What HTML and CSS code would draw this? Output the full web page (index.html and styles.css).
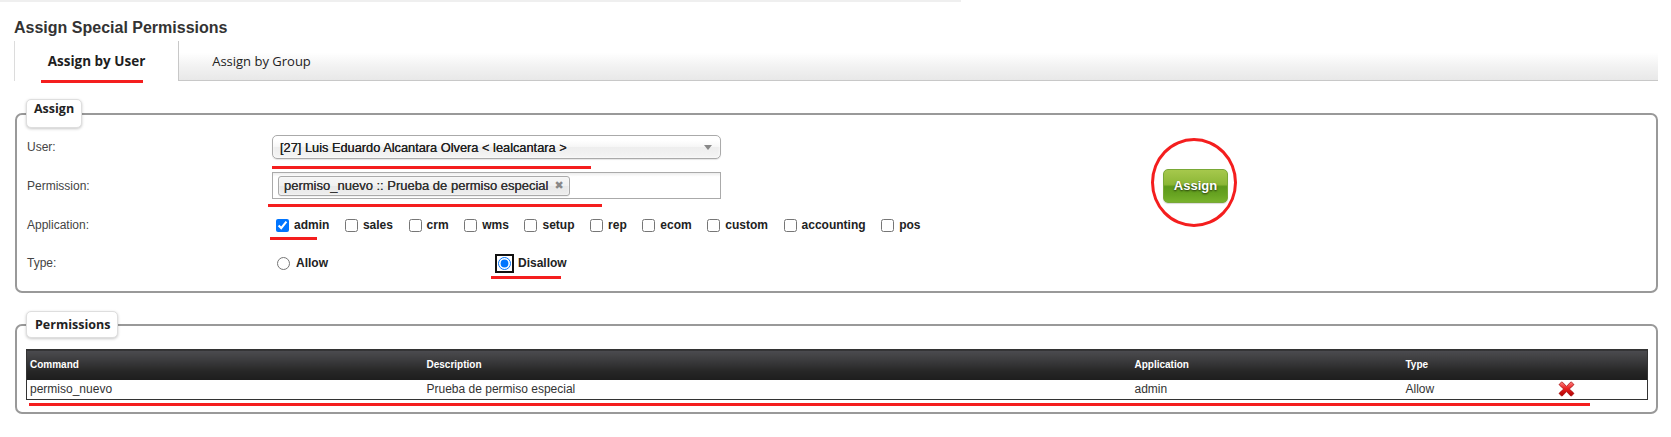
FILE: index.html
```html
<!DOCTYPE html>
<html lang="es">
<head>
<meta charset="utf-8">
<title>Assign Special Permissions</title>
<link rel="stylesheet" href="styles.css">
</head>
<body>
<div class="topline"></div>
<div class="page">
  <h1 class="title">Assign Special Permissions</h1>
  <div class="tabs">
    <div class="tab tab-active">Assign by User</div>
    <div class="tab">Assign by Group</div>
  </div>

  <fieldset class="box box-assign">
    <legend class="box-legend">Assign</legend>
    <div class="form-rows">
      <div class="f-row row-user">
        <label class="f-label">User:</label>
        <div class="chosen-single">
          <span class="chosen-text">[27] Luis Eduardo Alcantara Olvera &lt; lealcantara &gt;</span>
          <b class="chosen-arrow"></b>
        </div>
      </div>

      <div class="f-row row-perm">
        <label class="f-label">Permission:</label>
        <div class="chosen-multi">
          <span class="choice">permiso_nuevo :: Prueba de permiso especial<span class="choice-close">&#x2716;</span></span>
        </div>
        <div class="btn-cell"><button class="btn-assign" type="button">Assign</button></div>
      </div>

      <div class="f-row row-app">
        <label class="f-label">Application:</label>
        <div class="checks">
          <label class="chk"><input type="checkbox" checked><span>admin</span></label>
          <label class="chk"><input type="checkbox"><span>sales</span></label>
          <label class="chk"><input type="checkbox"><span>crm</span></label>
          <label class="chk"><input type="checkbox"><span>wms</span></label>
          <label class="chk"><input type="checkbox"><span>setup</span></label>
          <label class="chk"><input type="checkbox"><span>rep</span></label>
          <label class="chk"><input type="checkbox"><span>ecom</span></label>
          <label class="chk"><input type="checkbox"><span>custom</span></label>
          <label class="chk"><input type="checkbox"><span>accounting</span></label>
          <label class="chk"><input type="checkbox"><span>pos</span></label>
        </div>
      </div>

      <div class="f-row row-type">
        <label class="f-label">Type:</label>
        <div class="radios">
          <label class="rad rad-allow"><input type="radio" name="type"><span>Allow</span></label>
          <label class="rad rad-disallow"><input class="radio-focus" type="radio" name="type" checked><span>Disallow</span></label>
        </div>
      </div>
    </div>
  </fieldset>

  <fieldset class="box box-perms">
    <legend class="box-legend legend-perms">Permissions</legend>
    <table class="perm-table">
      <colgroup>
        <col class="c-cmd"><col class="c-desc"><col class="c-app"><col class="c-type"><col class="c-act">
      </colgroup>
      <thead>
        <tr><th>Command</th><th>Description</th><th>Application</th><th>Type</th><th></th></tr>
      </thead>
      <tbody>
        <tr>
          <td>permiso_nuevo</td>
          <td>Prueba de permiso especial</td>
          <td>admin</td>
          <td>Allow</td>
          <td class="act-cell">
            <svg class="del-icon" width="17" height="16" viewBox="0 0 17 16" aria-label="delete">
              <defs>
                <linearGradient id="xg" x1="0" y1="0" x2="0" y2="1">
                  <stop offset="0" stop-color="#ff8080"/>
                  <stop offset="0.45" stop-color="#ea2222"/>
                  <stop offset="1" stop-color="#b00000"/>
                </linearGradient>
              </defs>
              <path d="M3.4 1.2 Q4 0.8 4.6 1.3 L8.5 5.4 L12.4 1.3 Q13 0.8 13.6 1.2 L15.6 3 Q16 3.6 15.5 4.2 L11.3 8 L15.5 11.8 Q16 12.4 15.6 13 L13.6 14.8 Q13 15.2 12.4 14.7 L8.5 10.6 L4.6 14.7 Q4 15.2 3.4 14.8 L1.4 13 Q1 12.4 1.5 11.8 L5.7 8 L1.5 4.2 Q1 3.6 1.4 3 Z" fill="url(#xg)" stroke="#9c0000" stroke-width="0.7" stroke-linejoin="round"/>
            </svg>
          </td>
        </tr>
      </tbody>
    </table>
  </fieldset>
</div>

<div class="marks">
  <span class="mark m-tab"></span>
  <span class="mark m-user"></span>
  <span class="mark m-perm"></span>
  <span class="mark m-admin"></span>
  <span class="mark m-disallow"></span>
  <span class="mark m-table"></span>
  <span class="m-circle"></span>
</div>
</body>
</html>
```

FILE: styles.css
```css
* { box-sizing: border-box; }

html, body {
  margin: 0;
  padding: 0;
  background: #fff;
}

body {
  position: relative;
  width: 1671px;
  height: 437px;
  overflow: hidden;
  font-family: "Liberation Sans", Arial, sans-serif;
  color: #333;
}

.topline {
  width: 961px;
  height: 2px;
  background: #efefef;
}

.page {
  padding-left: 14px;
  width: 1658px;
}

.title {
  margin: 16px 0 3px 0;
  height: 20px;
  font: bold 16px/20px "Liberation Sans", Arial, sans-serif;
  color: #333;
}

/* Tabs */
.tabs {
  display: flex;
  height: 40px;
  border-bottom: 1px solid #c8c8c8;
  background: linear-gradient(#ffffff 0%, #ffffff 30%, #f3f3f3 62%, #e8e8e8 100%);
}

.tab {
  width: 165px;
  display: flex;
  align-items: center;
  justify-content: center;
  font: 13px "Open Sans", "Liberation Sans", sans-serif;
  color: #222;
}

.tab-active {
  height: 40px;
  margin-bottom: -1px;
  padding-bottom: 1px;
  background: #fff;
  border-left: 1px solid #dcdcdc;
  border-right: 1px solid #c8c8c8;
  font-size: 13.5px;
  font-weight: bold;
  color: #1e1e1e;
}

/* Fieldset boxes */
.box {
  margin: 18px 0 0 1px;
  border: 2px solid #999;
  border-radius: 7px;
  min-width: 0;
}

.box-legend {
  height: 29px;
  line-height: 27px;
  padding: 0 7px;
  background: #fff;
  border: 1px solid #dedede;
  border-radius: 5px;
  box-shadow: 0 1px 3px rgba(0, 0, 0, 0.22);
  font: bold 12.5px "Open Sans", "Liberation Sans", sans-serif;
  color: #222;
}

.legend-perms {
  height: 27px;
  line-height: 25px;
  padding: 0 7px 0 8px;
}

.box-assign {
  padding: 7px 10px 18px 9px;
}

.box-perms {
  padding: 11px 8px 12px 9px;
}

/* Assign form */
.form-rows {
  display: flex;
  flex-direction: column;
}

.f-row {
  display: flex;
  align-items: center;
}

.row-user { height: 24px; }
.row-perm { height: 27px; margin-top: 13px; }
.row-app { height: 20px; margin-top: 16px; }
.row-type { height: 20px; margin-top: 18px; }

.f-label {
  flex: none;
  width: 246px;
  padding-left: 1px;
  font-size: 12px;
  color: #444;
}

.chosen-single {
  flex: none;
  width: 449px;
  height: 24px;
  padding-left: 7px;
  display: flex;
  align-items: center;
  border: 1px solid #aaa;
  border-radius: 5px;
  background: linear-gradient(#ffffff 20%, #f6f6f6 50%, #eeeeee 52%, #f4f4f4 100%);
  box-shadow: 0 0 3px #fff inset, 0 1px 1px rgba(0, 0, 0, 0.1);
}

.chosen-text {
  flex: 1;
  font-size: 12.8px;
  color: #222;
  text-shadow: 0 0 0.4px #222;
}

.chosen-arrow {
  width: 0;
  height: 0;
  margin-right: 8px;
  border-left: 4px solid transparent;
  border-right: 4px solid transparent;
  border-top: 5px solid #888;
}

.chosen-multi {
  flex: none;
  width: 449px;
  height: 27px;
  padding: 0 5px;
  display: flex;
  align-items: center;
  border: 1px solid #aaa;
  background: linear-gradient(#eeeeee 1%, #ffffff 15%);
}

.choice {
  display: inline-flex;
  align-items: center;
  height: 20px;
  padding: 0 5px;
  border: 1px solid #aaa;
  border-radius: 3px;
  background: linear-gradient(#f4f4f4 20%, #f0f0f0 50%, #e8e8e8 52%, #eeeeee 100%);
  box-shadow: 0 0 2px #fff inset, 0 1px 0 rgba(0, 0, 0, 0.05);
  font-size: 13px;
  color: #333;
  text-shadow: 0 0 0.4px #333;
}

.choice-close {
  margin-left: 6px;
  font: 11px "DejaVu Sans", sans-serif;
  color: #888;
  text-shadow: none;
}

.btn-cell {
  display: flex;
  align-items: center;
  height: 27px;
}

.btn-assign {
  flex: none;
  margin-left: 442px;
  width: 65px;
  height: 34px;
  padding: 0;
  border: 1px solid #79a836;
  border-radius: 5px;
  background: linear-gradient(#a6c84c 0%, #8cb737 45%, #5d991b 52%, #68a422 78%, #78b22c 100%);
  box-shadow: 0 1px 1px rgba(0, 0, 0, 0.15);
  color: #fff;
  font: bold 13px "Liberation Sans", Arial, sans-serif;
  text-shadow: 0 1px 2px rgba(0, 0, 0, 0.7);
}

.checks {
  display: flex;
  align-items: center;
  gap: 15.6px;
  padding-left: 4px;
}

.chk {
  display: flex;
  align-items: center;
  gap: 5px;
  font: bold 12px "Liberation Sans", Arial, sans-serif;
  color: #222;
}

.chk input {
  margin: 0;
  width: 13px;
  height: 13px;
}

.radios {
  display: flex;
  align-items: center;
  padding-left: 5px;
}

.rad {
  display: flex;
  align-items: center;
  font: bold 12px "Liberation Sans", Arial, sans-serif;
  color: #222;
}

.rad input {
  margin: 0;
  width: 13px;
  height: 13px;
}

.rad-allow {
  width: 221px;
  gap: 6px;
}

.rad-disallow {
  gap: 7px;
}

.radio-focus {
  outline: 2px solid #111;
  outline-offset: 1px;
  border-radius: 3px;
}

/* Permissions table */
.perm-table {
  width: 100%;
  border-collapse: collapse;
  table-layout: fixed;
  border: 1px solid #333;
}

.c-cmd { width: 397px; }
.c-desc { width: 708px; }
.c-app { width: 271px; }
.c-type { width: 151px; }

.perm-table th {
  height: 30px;
  padding: 0 3px;
  text-align: left;
  background: linear-gradient(#4c4c50 0%, #3a3a3c 35%, #262626 70%, #1d1d1d 100%);
  color: #fff;
  font: bold 10px "Liberation Sans", Arial, sans-serif;
}

.perm-table td {
  height: 20px;
  padding: 0 3px;
  font: 12px "Liberation Sans", Arial, sans-serif;
  color: #333;
  background: #fff;
}

.act-cell {
  line-height: 0;
}

.del-icon {
  display: inline-block;
  vertical-align: middle;
  margin-left: 1px;
}

/* Red annotation marks drawn over the screenshot */
.marks {
  position: absolute;
  left: 0;
  top: 0;
  width: 0;
  height: 0;
}

.mark {
  position: absolute;
  height: 3px;
  background: #f41e1e;
}

.m-tab { left: 41px; top: 80px; width: 102px; }
.m-user { left: 272px; top: 166px; width: 319px; }
.m-perm { left: 268px; top: 204px; width: 334px; }
.m-admin { left: 270px; top: 237px; width: 47px; }
.m-disallow { left: 491px; top: 276px; width: 70px; }
.m-table { left: 29px; top: 403px; width: 1561px; }

.m-circle {
  position: absolute;
  left: 1151px;
  top: 138px;
  width: 86px;
  height: 89px;
  border: 3px solid #f41e1e;
  border-radius: 50%;
}
```
